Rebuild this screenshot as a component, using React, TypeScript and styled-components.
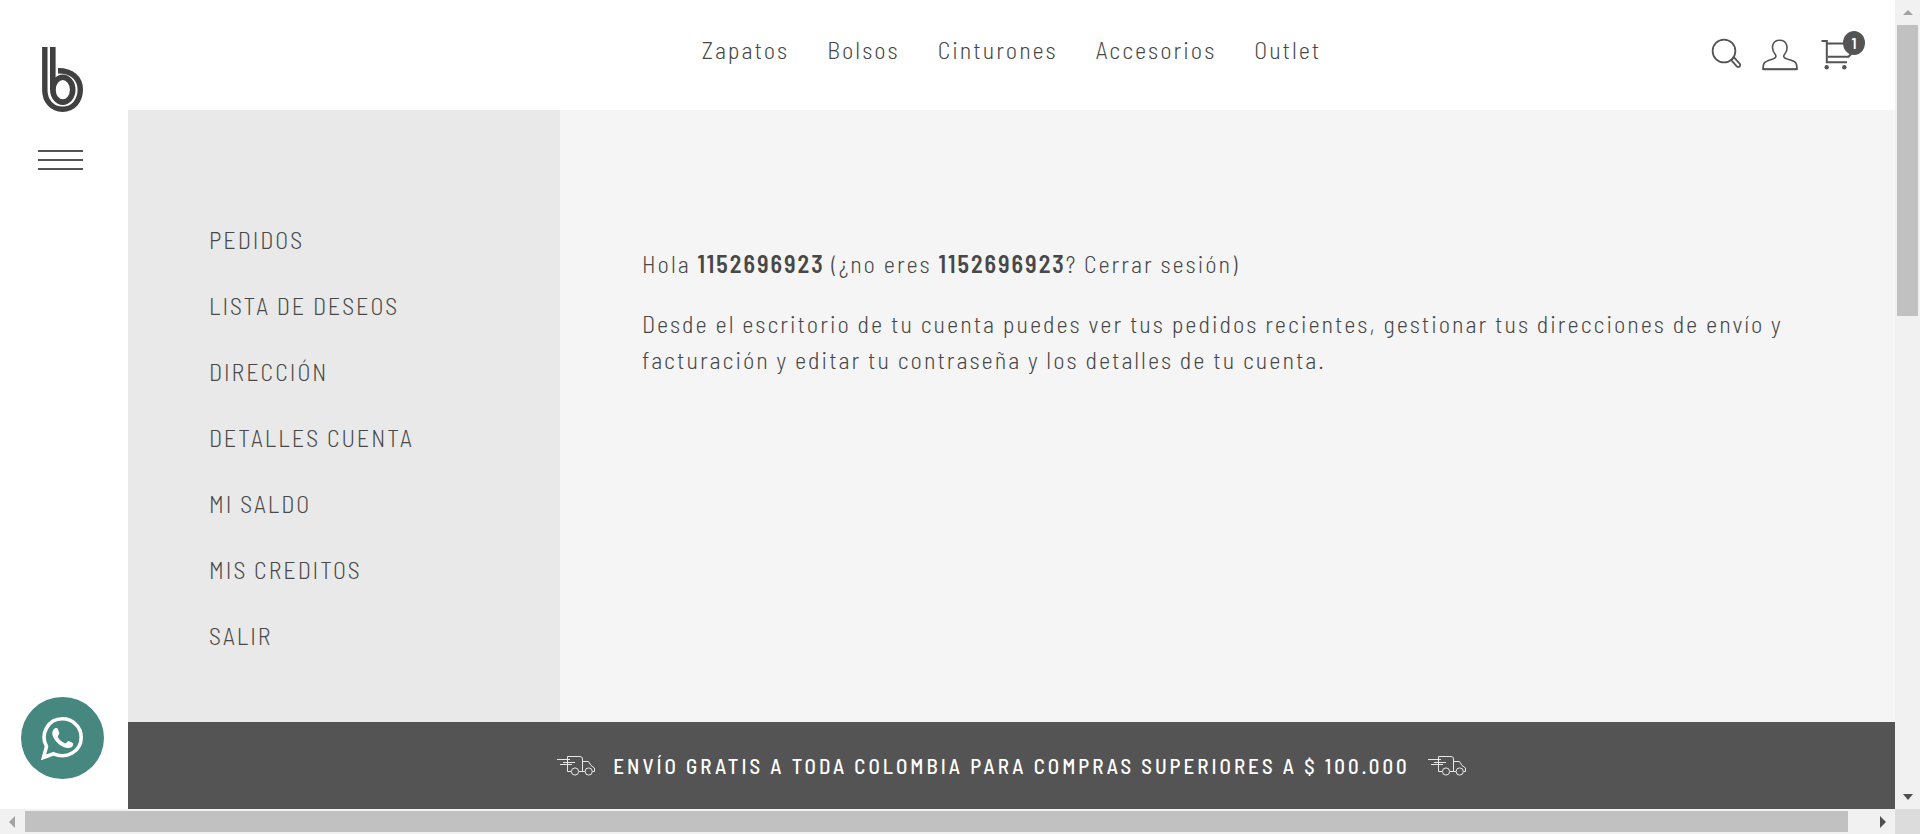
import React from "react";
import styled, { createGlobalStyle } from "styled-components";

const ink = "#545454";
const textInk = "#484848";

const GlobalStyle = createGlobalStyle`
  *, *::before, *::after { box-sizing: border-box; }
  body {
    margin: 0;
    background: #fff;
    color: ${textInk};
    font-family: "Barlow Semi Condensed", "Roboto Condensed", "Liberation Sans Narrow", "Liberation Sans", sans-serif;
    font-size: 24px;
    font-weight: 300;
    letter-spacing: 2px;
  }
  a { color: inherit; text-decoration: none; }
  button { font: inherit; color: inherit; background: none; border: 0; padding: 0; cursor: pointer; }
  svg { display: block; }
`;

const Frame = styled.div`
  display: grid;
  grid-template-columns: minmax(0, 1fr) 25px;
  grid-template-rows: minmax(0, 1fr) 25px;
  min-height: 100vh;
`;

const Page = styled.div`
  display: flex;
`;

const Rail = styled.aside`
  flex: 0 0 128px;
  display: flex;
  flex-direction: column;
  align-items: flex-start;
  padding: 46px 0 30px 21px;
`;

const LogoLink = styled.a`
  margin-left: 21px;
`;

const MenuButton = styled.button`
  display: flex;
  flex-direction: column;
  gap: 7px;
  width: 45px;
  margin: 37px 0 0 17px;
`;

const MenuBar = styled.span`
  height: 2px;
  width: 100%;
  background: ${ink};
`;

const WhatsAppLink = styled.a`
  display: flex;
  align-items: center;
  justify-content: center;
  width: 83px;
  height: 82px;
  margin-top: auto;
  border-radius: 50%;
  background: #46877f;
`;

const Column = styled.div`
  flex: 1;
  min-width: 0;
  display: flex;
  flex-direction: column;
`;

const Header = styled.header`
  display: grid;
  grid-template-columns: 1fr auto 1fr;
  height: 110px;
  padding: 0 30px;
`;

const Nav = styled.nav`
  grid-column: 2;
  display: flex;
  gap: 38px;
  padding-top: 35px;
  line-height: 30px;
`;

const Tools = styled.div`
  display: flex;
  justify-content: flex-end;
  align-items: flex-start;
  gap: 20px;
  padding-top: 30px;
`;

const ToolButton = styled.button`
  position: relative;
  height: 42px;
`;

const Badge = styled.span`
  position: absolute;
  top: 1px;
  right: 0;
  width: 22px;
  height: 24px;
  border-radius: 50%;
  background: ${ink};
  color: #fff;
  font-size: 16px;
  font-weight: 600;
  line-height: 24px;
  letter-spacing: 0;
  text-align: center;
`;

const Account = styled.div`
  flex: 1;
  display: flex;
`;

const SideMenu = styled.ul`
  flex: 0 0 432px;
  margin: 0;
  padding: 97px 40px 53px 81px;
  list-style: none;
  background: #e9e9e9;
  text-transform: uppercase;
`;

const SideItem = styled.li`
  padding: 18px 0;
  line-height: 30px;
`;

const Content = styled.main`
  flex: 1;
  min-width: 0;
  padding: 136px 80px 40px 82px;
  background: #f5f5f5;
  line-height: 36px;
`;

const Paragraph = styled.p`
  margin: 0 0 24px;
`;

const UserName = styled.strong`
  font-weight: 600;
`;

const Banner = styled.div`
  display: flex;
  align-items: center;
  justify-content: center;
  gap: 18px;
  height: 87px;
  background: ${ink};
  color: #fff;
  font-size: 21px;
  font-weight: 500;
  letter-spacing: 3px;
  text-transform: uppercase;
`;

const Track = styled.div<{ $vertical?: boolean }>`
  display: flex;
  flex-direction: ${(p) => (p.$vertical ? "column" : "row")};
  justify-content: space-between;
  align-items: center;
  background: #f1f1f1;
`;

const ArrowBox = styled.span`
  flex: 0 0 25px;
  display: flex;
  align-items: center;
  justify-content: center;
  width: 25px;
  height: 25px;
`;

const Rest = styled.div<{ $vertical?: boolean }>`
  flex: 1;
  align-self: stretch;
  padding: ${(p) => (p.$vertical ? "0 2px" : "2px 0")};
`;

const Thumb = styled.div<{ $vertical?: boolean }>`
  background: #c1c1c1;
  width: ${(p) => (p.$vertical ? "100%" : "98.8%")};
  height: ${(p) => (p.$vertical ? "38.4%" : "100%")};
`;

const Corner = styled.div`
  background: #dcdcdc;
`;

const Logo = () => (
  <svg width="42" height="67" viewBox="42 46 42 67" fill="none" stroke="#404040">
    <path strokeWidth="5.4" d="M44.8 47V90C44.8 101 52 109.2 62.6 109.2S80.3 101 80.3 89.6S72 70.6 58 70.7" />
    <path strokeWidth="5.6" d="M52.8 47V90" />
    <ellipse strokeWidth="5.6" cx="62.8" cy="89.7" rx="9.9" ry="12.4" />
  </svg>
);

const SearchIcon = () => (
  <svg width="30" height="42" viewBox="1711 30 30 42" fill="none" stroke={ink} strokeWidth="1.8">
    <circle cx="1724" cy="51" r="11.4" />
    <path d="M1731.2 60.1L1736.8 66.4A1.8 1.8 0 0 0 1739.6 63.6L1734 57.4Z" strokeLinejoin="round" />
  </svg>
);

const UserIcon = () => (
  <svg width="38" height="42" viewBox="1761 30 38 42" fill="none" stroke={ink} strokeWidth="1.6">
    <path d="M1763 69.2H1797C1797.2 61.2 1794.5 61.3 1786.5 58.8C1783.3 57.6 1783 56 1784.8 54C1787 51.4 1787.4 48 1786.6 45C1785.6 41.8 1783.3 40.3 1779.7 40.3S1773.7 42 1772.8 45C1772 48.4 1773 51.6 1775 54C1776.6 56.2 1776.2 57.8 1773.4 58.8C1765.5 61.3 1762.8 61.4 1763 69.2Z" />
    <path strokeWidth="2" d="M1763 69.2H1797" />
  </svg>
);

const CartIcon = () => (
  <svg width="46" height="42" viewBox="1819 30 46 42" fill="none" stroke={ink} strokeWidth="2">
    <path d="M1821.5 41H1826.8V62.2H1847M1826.8 43.6H1850M1828 56.8H1848.5L1852 53" />
    <circle cx="1826.7" cy="67.3" r="2.2" fill={ink} stroke="none" />
    <circle cx="1844.3" cy="67.3" r="2.2" fill={ink} stroke="none" />
  </svg>
);

const TruckIcon = () => (
  <svg width="38" height="22" viewBox="0 0 38 22" fill="none" stroke="#e8e8e8" strokeWidth="1">
    <path d="M10.5 16.5V1.5H23Q25.5 1.5 25.5 4V16.5M10.5 16.5H14M22 16.5H28M25.5 6.5H31.5L34 10.5L37.5 13V16.5H35.5" />
    <path d="M0 4.5H13M6 7.5H18M3 9.5H15" />
    <circle cx="18" cy="16.5" r="3.6" />
    <circle cx="31.7" cy="16.5" r="3.6" />
  </svg>
);

const WhatsAppIcon = () => (
  <svg width="43" height="44" viewBox="0 0 43 44" fill="none">
    <path d="M2.5 41.5L5.5 30.5C-1 18.5 6.5 2.8 21.5 2.8C31.8 2.8 40.2 11 40.2 21.2C40.2 35.5 25.5 43.5 12.5 37.8Z" stroke="#fff" strokeWidth="3.6" />
    <path fill="#fff" d="M14 12.2C15.6 11.8 16.4 12 17 13.5L18.3 17C18.7 18.6 16.5 19.6 16.7 20.8C18.2 24 20.8 26.2 24.3 27.5C25.6 27.6 26.5 24.6 28.2 25.2L31.7 27C32.8 27.6 32 30 31 31C25.2 35 14.2 27.5 11.6 19.5C10.8 16.4 11.6 13.5 14 12.2Z" />
  </svg>
);

const arrows = {
  up: "M2 9L7 4L12 9Z",
  down: "M2 4H12L7 10Z",
  left: "M9 1V13L3 7Z",
  right: "M4 1V13L10 7Z",
};

const Arrow = ({ dir, muted }: { dir: keyof typeof arrows; muted?: boolean }) => (
  <ArrowBox>
    <svg width="14" height="14" viewBox="0 0 14 14" fill={muted ? "#a3a3a3" : "#505050"}>
      <path d={arrows[dir]} />
    </svg>
  </ArrowBox>
);

const categories = ["Zapatos", "Bolsos", "Cinturones", "Accesorios", "Outlet"];
const accountLinks = ["Pedidos", "Lista de deseos", "Dirección", "Detalles cuenta", "Mi saldo", "Mis creditos", "Salir"];

export default function App() {
  return (
    <>
      <GlobalStyle />
      <Frame>
        <Page>
          <Rail>
            <LogoLink href="#" aria-label="Inicio"><Logo /></LogoLink>
            <MenuButton aria-label="Menú"><MenuBar /><MenuBar /><MenuBar /></MenuButton>
            <WhatsAppLink href="#" aria-label="WhatsApp"><WhatsAppIcon /></WhatsAppLink>
          </Rail>
          <Column>
            <Header>
              <Nav>
                {categories.map((c) => <a key={c} href="#">{c}</a>)}
              </Nav>
              <Tools>
                <ToolButton aria-label="Buscar"><SearchIcon /></ToolButton>
                <ToolButton aria-label="Mi cuenta"><UserIcon /></ToolButton>
                <ToolButton aria-label="Carrito"><CartIcon /><Badge>1</Badge></ToolButton>
              </Tools>
            </Header>
            <Account>
              <SideMenu>
                {accountLinks.map((l) => <SideItem key={l}><a href="#">{l}</a></SideItem>)}
              </SideMenu>
              <Content>
                <Paragraph>
                  Hola <UserName>1152696923</UserName> (¿no eres <UserName>1152696923</UserName>? <a href="#">Cerrar sesión</a>)
                </Paragraph>
                <Paragraph>
                  Desde el escritorio de tu cuenta puedes ver tus <a href="#">pedidos recientes</a>, gestionar tus{" "}
                  <a href="#">direcciones de envío y facturación</a> y{" "}
                  <a href="#">editar tu contraseña y los detalles de tu cuenta</a>.
                </Paragraph>
              </Content>
            </Account>
            <Banner>
              <TruckIcon />
              <span>Envío gratis a toda Colombia para compras superiores a $ 100.000</span>
              <TruckIcon />
            </Banner>
          </Column>
        </Page>
        <Track $vertical>
          <Arrow dir="up" muted />
          <Rest $vertical><Thumb $vertical /></Rest>
          <Arrow dir="down" />
        </Track>
        <Track>
          <Arrow dir="left" muted />
          <Rest><Thumb /></Rest>
          <Arrow dir="right" />
        </Track>
        <Corner />
      </Frame>
    </>
  );
}
